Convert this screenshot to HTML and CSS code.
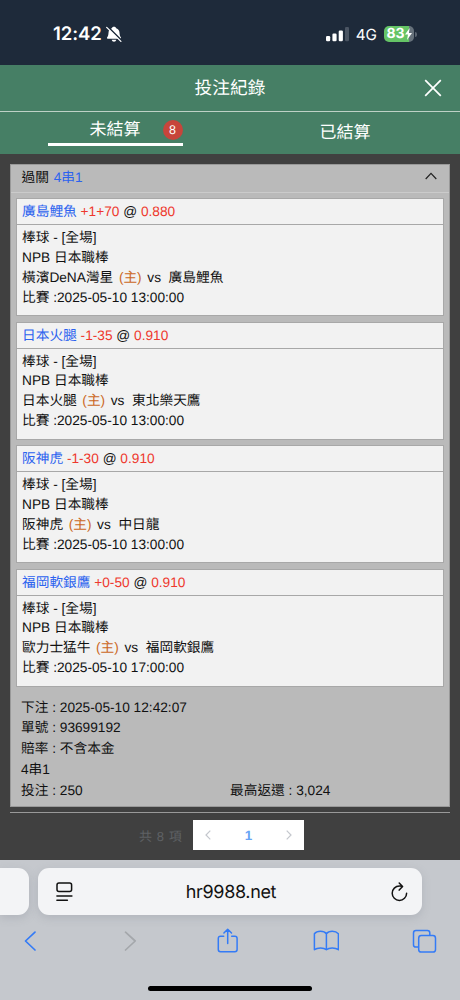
FILE: index.html
```html
<!DOCTYPE html>
<html lang="zh-Hant">
<head>
<meta charset="utf-8">
<title>投注紀錄</title>
<link rel="stylesheet" href="styles.css">
</head>
<body>
<div class="phone">
  <div class="status">
    <div class="status-left">
      <span class="clock">12:42</span>
      <svg class="bell" width="16" height="17" viewBox="0 0 16 17">
        <path d="M8 .8C9.3.8 10 1.500 10.200 2.300 12.400 3 13.400 4.700 13.500 6.700c.1 2.500.6 3.500 1.300 4.500.5.700.2 1.500-.5 1.500H1.700c-.700 0-1-.8-.5-1.500.8-1 1.200-2 1.300-4.500C2.600 4.700 3.600 3 5.800 2.300 6 1.500 6.700.8 8 .8z" fill="#fff"/>
        <path d="M5.700 13.700h4.600C10 15 9.200 15.700 8 15.700S6 15 5.700 13.700z" fill="#fff"/>
        <path d="M1.700.6l14 14" stroke="#1e2a3a" stroke-width="1.500"/>
        <path d="M.7 1.400l14.200 14" stroke="#fff" stroke-width="1.300" stroke-linecap="round"/>
      </svg>
    </div>
    <div class="status-right">
      <svg width="23" height="15" viewBox="0 0 23 15">
        <rect x="0" y="9" width="4.200" height="5.300" rx="1.200" fill="#fff"/>
        <rect x="6.400" y="6.500" width="4.200" height="7.800" rx="1.200" fill="#fff"/>
        <rect x="12.700" y="3.500" width="4.200" height="10.800" rx="1.200" fill="#fff"/>
        <rect x="19" y="0" width="4" height="14.300" rx="1.200" fill="#4b5563"/>
      </svg>
      <span class="network">4G</span>
      <div class="battery">
        <span class="battery-level">83</span>
        <svg width="7" height="12" viewBox="0 0 7 12"><path d="M4.700 0L0 6.600h3L2 12l5-7H3.900z" fill="#fff"/></svg>
      </div>
      <span class="battery-cap"></span>
    </div>
  </div>

  <header class="titlebar">
    <h1 class="title">投注紀錄</h1>
    <svg class="close" width="18" height="18" viewBox="0 0 18 18"><path d="M1.200 1.200l15.600 15.600M16.800 1.200L1.200 16.800" stroke="#fff" stroke-width="1.700"/></svg>
  </header>
  <nav class="tabs">
    <div class="tab"><div class="tab-active">未結算<span class="badge">8</span></div></div>
    <div class="tab">已結算</div>
  </nav>

  <main class="content">
    <section class="ticket">
      <div class="ticket-head">
        <div>過關 <span class="blue head-type">4串1</span></div>
        <svg width="12" height="8" viewBox="0 0 12 8"><path d="M.7 7L6 1.300 11.300 7" fill="none" stroke="#222" stroke-width="1.200"/></svg>
      </div>
      <div class="bets">
        <article class="bet">
          <div class="bet-head"><span class="blue">廣島鯉魚</span> <span class="red">+1+70</span> @ <span class="red">0.880</span></div>
          <div class="bet-body">
            <div>棒球 - [全場]</div><div>NPB 日本職棒</div>
            <div>橫濱DeNA灣星 <span class="home">(主)</span> vs&nbsp; 廣島鯉魚</div>
            <div>比賽 :2025-05-10 13:00:00</div>
          </div>
        </article>
        <article class="bet">
          <div class="bet-head"><span class="blue">日本火腿</span> <span class="red">-1-35</span> @ <span class="red">0.910</span></div>
          <div class="bet-body">
            <div>棒球 - [全場]</div><div>NPB 日本職棒</div>
            <div>日本火腿 <span class="home">(主)</span> vs&nbsp; 東北樂天鷹</div>
            <div>比賽 :2025-05-10 13:00:00</div>
          </div>
        </article>
        <article class="bet">
          <div class="bet-head"><span class="blue">阪神虎</span> <span class="red">-1-30</span> @ <span class="red">0.910</span></div>
          <div class="bet-body">
            <div>棒球 - [全場]</div><div>NPB 日本職棒</div>
            <div>阪神虎 <span class="home">(主)</span> vs&nbsp; 中日龍</div>
            <div>比賽 :2025-05-10 13:00:00</div>
          </div>
        </article>
        <article class="bet">
          <div class="bet-head"><span class="blue">福岡軟銀鷹</span> <span class="red">+0-50</span> @ <span class="red">0.910</span></div>
          <div class="bet-body">
            <div>棒球 - [全場]</div><div>NPB 日本職棒</div>
            <div>歐力士猛牛 <span class="home">(主)</span> vs&nbsp; 福岡軟銀鷹</div>
            <div>比賽 :2025-05-10 17:00:00</div>
          </div>
        </article>
      </div>
      <div class="summary">
        <div>下注 : 2025-05-10 12:42:07</div>
        <div>單號 : 93699192</div>
        <div>賠率 : 不含本金</div>
        <div>4串1</div>
        <div class="summary-row"><span>投注 : 250</span><span>最高返還 : 3,024</span></div>
      </div>
    </section>
    <div class="divider"></div>
    <div class="pagination">
      <span class="total">共 8 項</span>
      <div class="pager">
        <svg width="6" height="10" viewBox="0 0 6 10"><path d="M5.300.7L1 5l4.300 4.300" fill="none" stroke="#c4c7cd" stroke-width="1.200"/></svg>
        <span class="page">1</span>
        <svg width="6" height="10" viewBox="0 0 6 10"><path d="M.7.7L5 5 .7 9.300" fill="none" stroke="#c4c7cd" stroke-width="1.200"/></svg>
      </div>
    </div>
  </main>

  <footer class="browser">
    <div class="address-row">
      <div class="prev-tab"></div>
      <div class="address">
        <svg width="17" height="20" viewBox="0 0 17 20" fill="none" stroke="#111" stroke-width="1.500" stroke-linecap="round"><rect x="1" y="1" width="14.600" height="8.600" rx="2"/><path d="M.9 14h15M.9 18.300h10.500"/></svg>
        <span class="domain">hr9988.net</span>
        <svg width="17" height="20" viewBox="0 0 17 20" fill="none" stroke="#111" stroke-width="1.500" stroke-linecap="round" stroke-linejoin="round"><path d="M15.600 11.200a7.200 7.200 0 1 1-7.200-7.200c1.100 0 2 .1 2.800.4M8.200 1.100l3.400 3.500-3.400 3.500"/></svg>
      </div>
    </div>
    <div class="toolbar">
      <svg width="26" height="26" viewBox="0 0 26 26"><path d="M18 4.200L8.500 13l9.500 9" fill="none" stroke="#347bf6" stroke-width="1.700" stroke-linecap="round" stroke-linejoin="round"/></svg>
      <svg width="26" height="26" viewBox="0 0 26 26"><path d="M8.500 4.200L18.200 13 8.500 22" fill="none" stroke="#a4a7ab" stroke-width="1.700" stroke-linecap="round" stroke-linejoin="round"/></svg>
      <svg width="26" height="26" viewBox="0 0 26 26" fill="none" stroke="#347bf6" stroke-width="1.500" stroke-linecap="round" stroke-linejoin="round"><path d="M8.700 8.200H5.500c-1.400 0-2.200.8-2.200 2.200v11.200c0 1.400.8 2.200 2.200 2.200h14.400c1.400 0 2.200-.8 2.200-2.200V10.400c0-1.400-.8-2.200-2.200-2.200h-3.200M12.700 15.500V1.200M8.900 5l3.800-3.800L16.500 5"/></svg>
      <svg width="26" height="26" viewBox="0 0 26 26" fill="none" stroke="#347bf6" stroke-width="1.500" stroke-linecap="round" stroke-linejoin="round"><path d="M13.400 5.700C11 2.500 4 2.500 1.400 5.700v16c3-2.300 9.500-2.300 12 0 2.500-2.300 9-2.300 12 0v-16c-3-3.200-9.500-3.200-12 0zM13.400 5.700v16"/></svg>
      <svg width="26" height="26" viewBox="0 0 26 26" fill="none" stroke="#347bf6" stroke-width="1.500"><path d="M7.700 19.100H4.900c-1.500 0-2.400-.9-2.400-2.400V4.900c0-1.500.9-2.400 2.400-2.400h11.500c1.500 0 2.400.9 2.400 2.400v2.500"/><rect x="7.700" y="7.600" width="16.800" height="16.400" rx="2.600"/></svg>
    </div>
    <div class="home-bar"></div>
  </footer>
</div>
</body>
</html>
```

FILE: styles.css
```css
* { box-sizing: border-box; }
body {
  margin: 0;
  font-family: "Liberation Sans", "Noto Sans CJK TC", sans-serif;
  font-size: 13.700px;
  color: #111;
  text-rendering: geometricPrecision;
}
svg { display: block; flex: none; }
.phone { width: 460px; height: 1000px; display: flex; flex-direction: column; background: #404040; overflow: hidden; }

.status {
  height: 65px; flex: none; background: #1e2a3a; color: #fff;
  display: flex; justify-content: space-between; padding: 3px 43px 0 53px;
  font-family: Inter, sans-serif;
}
.status-left, .status-right { display: flex; align-items: center; }
.clock { font-size: 18.500px; font-weight: 600; letter-spacing: -0.1px; }
.bell { margin-left: 4px; }
.network { font-size: 15.300px; margin-left: 7px; }
.battery {
  margin-left: 7px; width: 30px; height: 16px; border-radius: 5px;
  background: linear-gradient(90deg, #65c466 83%, #66717b 83%);
  display: flex; align-items: center; justify-content: center;
}
.battery-level { font-size: 14px; font-weight: 700; line-height: 16px; }
.battery-cap { width: 2px; height: 5px; margin-left: 1px; background: #59636f; border-radius: 0 2px 2px 0; }

.titlebar {
  height: 47px; flex: none; background: #467f65; border-bottom: 1px solid #bed1c6;
  display: grid; grid-template-columns: 1fr auto 1fr; align-items: center; padding: 0 18px;
}
.title { grid-column: 2; margin: 0; color: #fff; font-size: 17.700px; font-weight: 400; line-height: 24px; }
.close { justify-self: end; }
.tabs { height: 42px; flex: none; background: #467f65; display: flex; color: #fff; font-size: 17px; }
.tab { flex: 1; display: flex; justify-content: center; align-items: center; line-height: 24px; }
.tab-active { position: relative; width: 135px; height: 30px; margin-bottom: 5px; padding-top: 2px; border-bottom: 3px solid #fff; display: flex; justify-content: center; align-items: center; }
.badge {
  position: absolute; right: 0; top: 4px; width: 20px; height: 20px; border-radius: 50%;
  background: #c7453b; font-size: 12.500px; line-height: 20px; text-align: center;
}

.content { height: 706px; flex: none; padding: 10px 10px 0; }
.ticket { width: 440px; height: 643px; background: #bababa; border: 1px solid #999; }
.ticket-head { height: 28px; border-bottom: 1px solid #cbcbcb; padding: 0 12px 5px 10.500px; display: flex; align-items: center; justify-content: space-between; }
.head-type { margin-left: 1px; }
.blue { color: #2c63ef; }
.red { color: #ee382d; }
.home { color: #cb681e; margin: 0 1.800px; }
.bets { padding: 5px 5px 0; display: flex; flex-direction: column; gap: 5.500px; }
.bet { height: 118px; background: #f2f2f2; border: 1px solid #a8a8a8; }
.bet-head { height: 26px; line-height: 25px; padding-left: 5px; border-bottom: 1px solid #a8a8a8; }
.bet-body { padding: 3px 5px 0; line-height: 19.850px; }
.bet-body > div { height: 19.850px; white-space: nowrap; }
.summary { padding: 11px 10px 0; line-height: 20.900px; }
.summary > div { height: 20.900px; }
.summary-row { display: grid; grid-template-columns: 1fr 1fr; }
.divider { height: 1px; background: #999; margin-top: 5px; }
.pagination { display: flex; justify-content: center; align-items: center; padding-right: 17px; margin-top: 7px; gap: 10.500px; }
.total { color: #5e6064; font-size: 13px; letter-spacing: 0.600px; }
.pager { width: 111px; height: 30px; background: #fff; display: flex; align-items: center; justify-content: space-between; padding: 0 12px; }
.page { color: #68a4f5; font-size: 13.500px; font-weight: 700; }

.browser { height: 140px; flex: none; background: #c5c8cd; }
.address-row { height: 64px; padding-top: 8px; display: flex; gap: 9px; }
.prev-tab, .address { height: 47px; background: #f3f4f6; box-shadow: 0 3px 9px #868d9850; }
.prev-tab { width: 29px; border-radius: 0 11px 11px 0; }
.address { width: 384px; border-radius: 11px; display: flex; align-items: center; justify-content: space-between; padding: 0 14px 0 18px; }
.domain { font: 18px Inter, sans-serif; letter-spacing: -0.350px; margin-right: 2px; padding-top: 1px; }
.toolbar { height: 35px; padding: 4px 23px 0 17px; display: flex; justify-content: space-between; }
.toolbar svg:nth-child(2) { margin-left: 26px; }
.toolbar svg:nth-child(3) { margin-left: 23px; }
.toolbar svg:nth-child(4) { margin-left: 24px; }
.toolbar svg:nth-child(5) { margin-left: 24px; }
.home-bar { width: 164px; height: 5px; background: #000; border-radius: 3px; margin: 27px auto 0; }
```
